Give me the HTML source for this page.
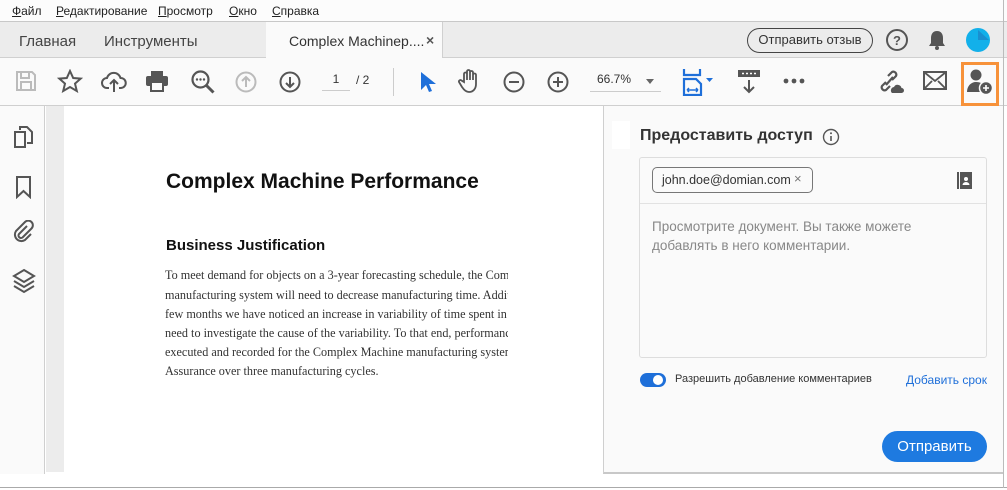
<!DOCTYPE html>
<html><head><meta charset="utf-8"><style>
*{box-sizing:border-box;margin:0;padding:0}
body{width:1007px;height:490px;overflow:hidden;background:#fff;font-family:"Liberation Sans",sans-serif;position:relative;color:#333}
.a{position:absolute}
.menu{left:0;top:0;width:1007px;height:22px;background:#fcfcfc;border-bottom:1px solid #c8c8c8;font-size:12px;color:#222}
.menu span{position:absolute;top:4px}
.tabs{left:0;top:22px;width:1007px;height:36px;background:#ececec;border-bottom:1px solid #d0d0d0}
.tb{left:0;top:58px;width:1007px;height:48px;background:#fafafa;border-bottom:1px solid #cfcfcf}
svg.i{position:absolute}
.panel{left:603px;top:106px;width:401px;height:368px;background:#fafafa;border-left:1px solid #cfcfcf;border-bottom:2px solid #c8c8c8;border-right:1px solid #cfcfcf}
p.t{position:absolute;left:101px;font-family:"Liberation Serif",serif;font-size:12.2px;color:#333;white-space:nowrap}
</style></head><body>
<div class="a menu">
<span style="left:12px"><u>Ф</u>айл</span><span style="left:56px"><u>Р</u>едактирование</span><span style="left:158px"><u>П</u>росмотр</span><span style="left:229px"><u>О</u>кно</span><span style="left:272px"><u>С</u>правка</span>
</div>
<div class="a tabs">
<div class="a" style="left:19px;top:11px;font-size:15px;color:#444">Главная</div>
<div class="a" style="left:104px;top:11px;font-size:15px;color:#444">Инструменты</div>
<div class="a" style="left:266px;top:0;width:177px;height:36px;background:#fafafa;border-right:1px solid #d0d0d0"></div>
<div class="a" style="left:289px;top:11px;font-size:14px;color:#333;white-space:nowrap">Complex Machinep....</div>
<div class="a" style="left:426px;top:10px;font-size:14px;color:#555;font-weight:bold">×</div>
<div class="a" style="left:747px;top:6px;width:126px;height:25px;border:1.5px solid #444;border-radius:13px;font-size:13px;color:#333;text-align:center;line-height:22px">Отправить отзыв</div>
<svg class="i" style="left:885px;top:6px" width="24" height="24" viewBox="0 0 24 24"><circle cx="12" cy="12" r="10" fill="none" stroke="#555" stroke-width="2"/><text x="12" y="17" font-size="13" font-weight="bold" text-anchor="middle" fill="#555" font-family="Liberation Sans">?</text></svg>
<svg class="i" style="left:927px;top:7px" width="20" height="22" viewBox="0 0 20 22"><path d="M10 2c-4 0-6 3-6 7v5l-2 3h16l-2-3V9c0-4-2-7-6-7z" fill="#555"/><circle cx="10" cy="19" r="2" fill="#555"/></svg>
<svg class="i" style="left:965px;top:5px" width="26" height="26"><circle cx="13" cy="13" r="12" fill="#12b0ea"/><path d="M13 3 L24 13 L13 13z" fill="#1a8fd0"/></svg>
</div>
<div class="a tb">
<svg class="i" style="left:15px;top:12px" width="22" height="22" viewBox="0 0 22 22"><path d="M2 2h15l3 3v15H2z" fill="none" stroke="#bbb" stroke-width="2"/><rect x="6" y="2" width="8" height="6" fill="none" stroke="#bbb" stroke-width="2"/><rect x="6" y="12" width="10" height="8" fill="none" stroke="#bbb" stroke-width="2"/></svg>
<svg class="i" style="left:57px;top:11px" width="26" height="24" viewBox="0 0 26 24"><path d="M13 2l3.2 7 7.5.6-5.7 5 1.8 7.4L13 18l-6.8 4 1.8-7.4-5.7-5 7.5-.6z" fill="none" stroke="#555" stroke-width="2"/></svg>
<svg class="i" style="left:101px;top:12px" width="26" height="24" viewBox="0 0 26 24"><path d="M8 18H6a5 5 0 0 1 0-10 7 7 0 0 1 13.5 0 5 5 0 0 1 .5 10h-2" fill="none" stroke="#555" stroke-width="2"/><path d="M13 22V11M9 14l4-4 4 4" fill="none" stroke="#555" stroke-width="2"/></svg>
<svg class="i" style="left:145px;top:12px" width="24" height="22" viewBox="0 0 24 22"><rect x="6" y="1" width="12" height="5" fill="#555"/><rect x="1" y="6" width="22" height="10" rx="2" fill="#555"/><rect x="6" y="12" width="12" height="9" fill="#fafafa" stroke="#555" stroke-width="2"/></svg>
<svg class="i" style="left:190px;top:11px" width="26" height="26" viewBox="0 0 26 26"><circle cx="10.5" cy="10.5" r="8" fill="none" stroke="#555" stroke-width="2.2"/><path d="M16.5 16.5l7 7" stroke="#555" stroke-width="3"/><circle cx="7" cy="10.5" r="1.2" fill="#555"/><circle cx="10.5" cy="10.5" r="1.2" fill="#555"/><circle cx="14" cy="10.5" r="1.2" fill="#555"/></svg>
<svg class="i" style="left:235px;top:13px" width="22" height="22" viewBox="0 0 22 22"><circle cx="11" cy="11" r="9.5" fill="none" stroke="#bbb" stroke-width="2"/><path d="M11 16V6M7 10l4-4 4 4" fill="none" stroke="#bbb" stroke-width="2"/></svg>
<svg class="i" style="left:279px;top:13px" width="22" height="22" viewBox="0 0 22 22"><circle cx="11" cy="11" r="9.5" fill="none" stroke="#555" stroke-width="2"/><path d="M11 6v10M7 12l4 4 4-4" fill="none" stroke="#555" stroke-width="2"/></svg>
<div class="a" style="left:322px;top:14px;width:28px;height:19px;border-bottom:1px solid #ccc;text-align:center;font-size:12px;color:#333">1</div>
<div class="a" style="left:356px;top:15px;font-size:12px;color:#333">/ 2</div>
<div class="a" style="left:393px;top:10px;width:1px;height:28px;background:#ccc"></div>
<svg class="i" style="left:418px;top:12px" width="18" height="24" viewBox="0 0 18 24"><path d="M3 2v18l5-5 3 7 3-1-3-7h7z" fill="#1e6fd9"/></svg>
<svg class="i" style="left:458px;top:10px" width="24" height="26" viewBox="0 0 24 26"><path d="M6 14V6a1.5 1.5 0 0 1 3 0v6V3.5a1.5 1.5 0 0 1 3 0V12V4.5a1.5 1.5 0 0 1 3 0V12V7a1.5 1.5 0 0 1 3 0v9c0 5-3 8-7 8-3 0-5-2-7-5l-3-5a1.5 1.5 0 0 1 2.5-1.5z" fill="none" stroke="#555" stroke-width="1.8"/></svg>
<svg class="i" style="left:503px;top:13px" width="22" height="22" viewBox="0 0 22 22"><circle cx="11" cy="11" r="9.5" fill="none" stroke="#555" stroke-width="2"/><path d="M6 11h10" stroke="#555" stroke-width="2"/></svg>
<svg class="i" style="left:547px;top:13px" width="22" height="22" viewBox="0 0 22 22"><circle cx="11" cy="11" r="9.5" fill="none" stroke="#555" stroke-width="2"/><path d="M6 11h10M11 6v10" stroke="#555" stroke-width="2"/></svg>
<div class="a" style="left:590px;top:14px;width:71px;height:20px;border-bottom:1px solid #ccc;font-size:12px;color:#333;padding-left:7px">66.7%</div>
<div class="a" style="left:646px;top:21px;width:0;height:0;border-left:4px solid transparent;border-right:4px solid transparent;border-top:5px solid #666"></div>
<svg class="i" style="left:682px;top:10px" width="34" height="28" viewBox="0 0 34 28"><path d="M2 1v6h16V1" fill="none" stroke="#1e6fd9" stroke-width="2.2"/><path d="M2 27V11h12l5 5v11z" fill="none" stroke="#1e6fd9" stroke-width="2.2"/><path d="M5 22h11M5 22l2-2M5 22l2 2M16 22l-2-2M16 22l-2 2" stroke="#1e6fd9" stroke-width="1.5" fill="none"/><path d="M24 10h7l-3.5 4z" fill="#1e6fd9"/></svg>
<svg class="i" style="left:737px;top:11px" width="24" height="26" viewBox="0 0 24 26"><rect x="1" y="1" width="22" height="7" fill="#555"/><path d="M5 4.5h2M9 4.5h2M13 4.5h2M17 4.5h2" stroke="#fff" stroke-width="1.4"/><path d="M12 11v12M7 18l5 5 5-5" fill="none" stroke="#555" stroke-width="2"/></svg>
<svg class="i" style="left:783px;top:20px" width="22" height="6"><circle cx="3" cy="3" r="2.4" fill="#555"/><circle cx="11" cy="3" r="2.4" fill="#555"/><circle cx="19" cy="3" r="2.4" fill="#555"/></svg>
<svg class="i" style="left:877px;top:12px" width="28" height="24" viewBox="0 0 28 24"><path d="M9 12l-4 4a3 3 0 0 0 4 4l4-4M15 10l4-4a3 3 0 0 0-4-4l-4 4M9 15l7-8" fill="none" stroke="#555" stroke-width="2.2"/><path d="M15 23a3.5 3.5 0 0 1 2-6 4 4 0 0 1 7.5 1 2.5 2.5 0 0 1 0 5z" fill="#555"/></svg>
<svg class="i" style="left:923px;top:13px" width="24" height="20" viewBox="0 0 24 20"><rect x="1" y="1" width="22" height="17" fill="none" stroke="#555" stroke-width="2"/><path d="M1 1l11 9 11-9M1 18l8-8M23 18l-8-8" fill="none" stroke="#555" stroke-width="1.8"/></svg>
<div class="a" style="left:961px;top:4px;width:38px;height:44px;border:3px solid #f7923a"></div>
<svg class="i" style="left:966px;top:10px" width="28" height="28" viewBox="0 0 28 28"><circle cx="10" cy="7" r="5.5" fill="#555"/><path d="M1 24c0-6 4-10 9-10s7 2 8 4v6z" fill="#555"/><circle cx="20" cy="20" r="6.5" fill="#555" stroke="#fafafa" stroke-width="1.5"/><path d="M17 20h6M20 17v6" stroke="#fff" stroke-width="1.6"/></svg>
</div>
<div class="a" style="left:0;top:106px;width:45px;height:368px;background:#fafafa;border-right:1px solid #cfcfcf"></div>
<svg class="i" style="left:13px;top:125px" width="22" height="24" viewBox="0 0 22 24"><path d="M7 5V2h7l5 5v11h-5" fill="none" stroke="#555" stroke-width="2"/><path d="M2 7h10v15H2z" fill="none" stroke="#555" stroke-width="2"/></svg>
<svg class="i" style="left:15px;top:175px" width="18" height="24" viewBox="0 0 18 24"><path d="M2 2h13v20l-6.5-6-6.5 6z" fill="none" stroke="#555" stroke-width="2"/></svg>
<svg class="i" style="left:12px;top:220px" width="24" height="24" viewBox="0 0 24 24"><path d="M15 6l-8 8a2.5 2.5 0 0 0 3.5 3.5l9-9a4.5 4.5 0 0 0-6.5-6.5l-9 9a6.5 6.5 0 0 0 9 9l6-6" fill="none" stroke="#555" stroke-width="2"/></svg>
<svg class="i" style="left:12px;top:268px" width="24" height="26" viewBox="0 0 24 26"><path d="M12 2l10 6-10 6-10-6z" fill="none" stroke="#555" stroke-width="2"/><path d="M2 13l10 6 10-6M2 18l10 6 10-6" fill="none" stroke="#555" stroke-width="2"/></svg>
<div class="a" style="left:46px;top:106px;width:18px;height:366px;background:#ececec"></div>
<div class="a" style="left:166px;top:170px;font-size:21px;font-weight:bold;color:#111;white-space:nowrap">Complex Machine Performance</div>
<div class="a" style="left:166px;top:237px;font-size:15px;font-weight:bold;color:#111">Business Justification</div>
<div class="a" style="left:64px;top:260px;width:444px;height:120px;overflow:hidden">
<p class="t" style="top:8px">To meet demand for objects on a 3-year forecasting schedule, the Complex Machine</p>
<p class="t" style="top:28px">manufacturing system will need to decrease manufacturing time. Additionally, in the past</p>
<p class="t" style="top:47px">few months we have noticed an increase in variability of time spent in manufacturing. We</p>
<p class="t" style="top:66px">need to investigate the cause of the variability. To that end, performance data was</p>
<p class="t" style="top:85px">executed and recorded for the Complex Machine manufacturing system by Quality</p>
<p class="t" style="top:104px">Assurance over three manufacturing cycles.</p>
</div>
<div class="a panel"></div>
<div class="a" style="left:612px;top:121px;width:18px;height:28px;background:#fff"></div>
<div class="a" style="left:640px;top:127px;font-size:16px;font-weight:bold;color:#333">Предоставить доступ</div>
<svg class="i" style="left:822px;top:128px" width="18" height="18" viewBox="0 0 18 18"><circle cx="9" cy="9" r="7.5" fill="none" stroke="#555" stroke-width="1.4"/><path d="M9 8v5" stroke="#555" stroke-width="1.6"/><circle cx="9" cy="5.3" r="1" fill="#555"/></svg>
<div class="a" style="left:639px;top:157px;width:348px;height:201px;background:#fafafa;border:1px solid #ddd;border-radius:3px"></div>
<div class="a" style="left:640px;top:203px;width:346px;height:1px;background:#e2e2e2"></div>
<div class="a" style="left:652px;top:167px;width:161px;height:26px;border:1px solid #777;border-radius:5px;font-size:12.5px;color:#333;line-height:24px;padding-left:9px;white-space:nowrap">john.doe@domian.com</div>
<div class="a" style="left:794px;top:171px;font-size:13px;color:#777">×</div>
<svg class="i" style="left:957px;top:172px" width="15" height="17" viewBox="0 0 15 17"><rect x="0" y="0" width="2" height="17" fill="#555"/><rect x="3" y="0" width="12" height="17" fill="#555"/><circle cx="9" cy="7" r="2" fill="#fff"/><path d="M5.5 13a3.5 3 0 0 1 7 0z" fill="#fff"/></svg>
<div class="a" style="left:652px;top:217px;font-size:13.5px;line-height:19px;color:#888">Просмотрите документ. Вы также можете<br>добавлять в него комментарии.</div>
<div class="a" style="left:640px;top:373px;width:26px;height:14px;border-radius:7px;background:#1e6fd9"></div>
<div class="a" style="left:653px;top:375px;width:10px;height:10px;border-radius:5px;background:#fff"></div>
<div class="a" style="left:675px;top:373px;font-size:11px;color:#333">Разрешить добавление комментариев</div>
<div class="a" style="left:906px;top:373px;font-size:12px;color:#1e6fd9">Добавить срок</div>
<div class="a" style="left:882px;top:431px;width:105px;height:31px;border-radius:16px;background:#1e7ae0;color:#fff;font-size:15px;text-align:center;line-height:31px">Отправить</div>
<div class="a" style="left:0;top:487px;width:1007px;height:1px;background:#aaa"></div>
<div class="a" style="left:1003px;top:0;width:1px;height:488px;background:#bbb"></div>
</body></html>
